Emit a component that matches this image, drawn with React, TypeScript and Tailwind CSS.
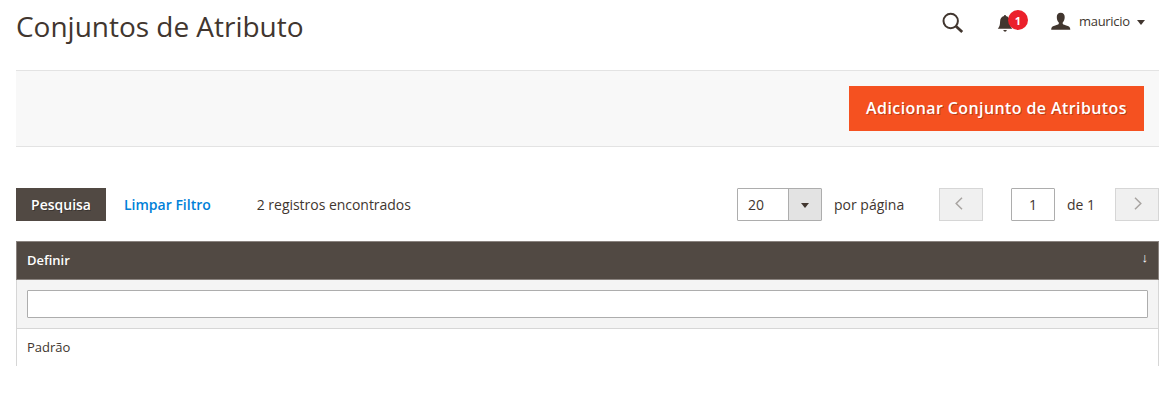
import React from "react";

function Caret({ className }: { className?: string }) {
  return (
    <svg className={className} width="8" height="5" viewBox="0 0 8 5" fill="currentColor">
      <path d="M0 0h8L4 5z" />
    </svg>
  );
}

function Header() {
  return (
    <header className="flex h-[70px] items-start justify-between">
      <h1 className="pt-[6px] text-[28px] leading-[40px] tracking-[-0.02px] text-[#41362f]">Conjuntos de Atributo</h1>
      <div className="flex pt-[10px] pr-[14px] text-[#41362f]">
        <svg className="mt-[2px]" width="22" height="22" viewBox="0 0 22 22" fill="none" stroke="currentColor">
          <circle cx="8.7" cy="9" r="7.2" strokeWidth="2" />
          <path d="M14 14.300l6.200 5.700" strokeWidth="2.800" />
        </svg>
        <div className="relative ml-[33px] h-[24px] w-[32px]">
          <svg className="mt-[5px]" width="16" height="17" viewBox="0 0 16 17" fill="currentColor">
            <path d="M8 0c.7 0 1 .5 1 1.100 2.800.6 3.800 2.700 3.900 5.400.1 3.600.6 5.300 2.400 7.300H.8c1.700-2 2.200-3.700 2.300-7.300C3.200 3.800 4.300 1.700 7 1.100 7 .5 7.300 0 8 0zM6.300 15h3.500c-.2 1.100-.9 1.700-1.700 1.700s-1.500-.6-1.800-1.700z" />
          </svg>
          <span className="absolute top-0 left-[11px] flex h-[20px] w-[20px] items-center justify-center rounded-full bg-[#eb202b] text-[11px] leading-none font-bold text-white">
            1
          </span>
        </div>
        <button className="ml-[22px] flex h-[24px] items-start">
          <svg className="mt-[2px]" width="20" height="18" viewBox="0 0 20 18" fill="currentColor">
            <path d="M9.700.8c2.700 0 4 1.700 4 4.300 0 2.500-.8 4.300-2 5.500v1.200c.6 1 2.300 1.300 4.300 1.900 2.300.6 3.300 1.400 3.300 4.100H.2c0-2.700 1-3.500 3.300-4.100 2-.6 3.700-.9 4.300-1.900v-1.200c-1.300-1.200-2-3-2-5.500C5.800 2.500 7 .8 9.700.8z" />
          </svg>
          <span className="ml-[8px] w-[53px] text-left text-[13px] leading-[22px] tracking-[-0.3px]">mauricio</span>
          <Caret className="mt-[10px] ml-[5px]" />
        </button>
      </div>
    </header>
  );
}

function Toolbar() {
  return (
    <div className="mt-[41px] flex h-[33px] items-center text-[14px] leading-[33px] text-[#41362f]">
      <button className="h-[33px] w-[90px] bg-[#514943] font-semibold text-white [text-shadow:1px_1px_0_rgba(0,0,0,.3)]">
        Pesquisa
      </button>
      <button className="ml-[18px] font-semibold text-[#0080d8]">Limpar Filtro</button>
      <span className="ml-[46px] tracking-[-0.03px]">2 registros encontrados</span>
      <div className="ml-auto flex h-[33px] w-[85px] rounded-[1px] border border-[#adadad] leading-[31px]">
        <span className="flex-1 pl-[10px]">20</span>
        <span className="flex w-[33px] items-center justify-center border-l border-[#adadad] bg-[#e3e3e3]">
          <Caret className="mt-[2px]" />
        </span>
      </div>
      <span className="ml-[12px] w-[105px]">por página</span>
      <button className="flex h-[33px] w-[44px] items-center justify-center border border-[#d6d6d6] bg-[#f0f0f0] text-[#a8a4a1]">
        <svg className="mr-[4px] mb-[2px]" width="8" height="13" viewBox="0 0 8 13" fill="none" stroke="currentColor" strokeWidth="1.500">
          <path d="M7 .7L1.200 6.500 7 12.300" />
        </svg>
      </button>
      <input
        className="ml-[28px] h-[33px] w-[44px] rounded-[1px] border border-[#adadad] bg-white text-center outline-none"
        defaultValue="1"
      />
      <span className="ml-[12px] w-[48px]">de 1</span>
      <button className="flex h-[33px] w-[44px] items-center justify-center border border-[#d6d6d6] bg-[#f0f0f0] text-[#a8a4a1]">
        <svg className="mb-[2px] ml-[2px]" width="8" height="13" viewBox="0 0 8 13" fill="none" stroke="currentColor" strokeWidth="1.500">
          <path d="M1 .7l5.800 5.800L1 12.300" />
        </svg>
      </button>
    </div>
  );
}

function Grid() {
  return (
    <div className="mt-[20px] text-[13px] text-[#41362f]">
      <div className="flex h-[39px] justify-between border border-[#8a837f] bg-[#514943] pr-[10px] pl-[10px] text-white">
        <span className="leading-[37px] font-semibold">Definir</span>
        <span className="pt-[5px] text-[13px] leading-[20px]">↓</span>
      </div>
      <div className="h-[49px] border-x border-b border-[#d6d6d6] bg-[#f4f4f4] px-[10px] pt-[10px]">
        <input className="block h-[28px] w-full rounded-[1px] border border-[#adadad] bg-white px-2 outline-none" />
      </div>
      <div className="h-[37px] border-x border-[#d6d6d6] px-[10px] leading-[37px]">Padrão</div>
    </div>
  );
}

export default function App() {
  return (
    <main className="h-[412px] overflow-hidden bg-white pr-[14px] pl-[16px] font-['Open_Sans',sans-serif]">
      <Header />
      <div className="flex h-[77px] items-start justify-end border-y border-[#e3e3e3] bg-[#f8f8f8] pt-[15px] pr-[15px]">
        <button className="h-[45px] w-[295px] bg-[#f55120] pb-[2px] text-[16px] font-semibold tracking-[0.4px] text-white [text-shadow:1px_1px_0_rgba(0,0,0,.25)]">
          Adicionar Conjunto de Atributos
        </button>
      </div>
      <Toolbar />
      <Grid />
    </main>
  );
}
